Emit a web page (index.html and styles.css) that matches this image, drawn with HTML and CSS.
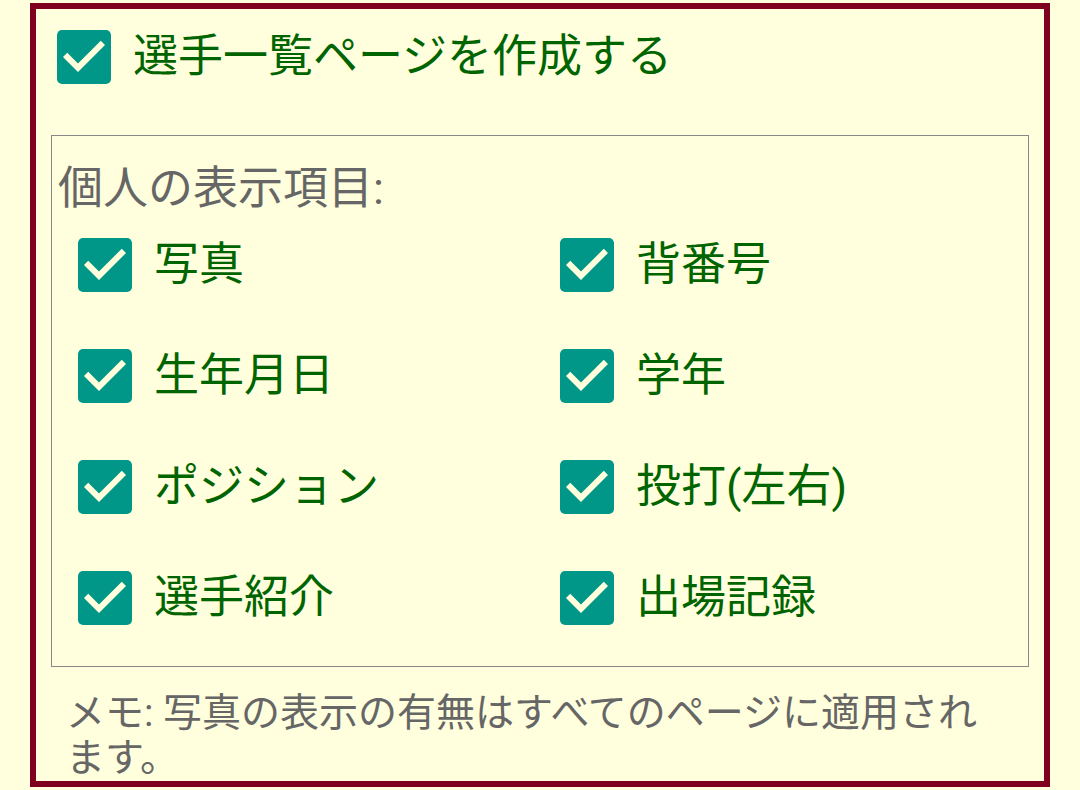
FILE: index.html
```html
<!DOCTYPE html>
<html lang="ja">
<head>
  <meta charset="UTF-8">
  <meta name="viewport" content="width=device-width, initial-scale=1.0">
  <title>選手一覧ページ設定</title>
  <link rel="stylesheet" href="styles.css">
</head>
<body>
  <svg class="defs" width="0" height="0">
    <symbol id="checked" viewBox="0 0 18 18">
      <rect width="18" height="18" rx="1.7" fill="#009688"/>
      <path d="M7 14L2 9l1.41-1.41L7 11.17l7.59-7.59L16 5l-9 9z" fill="#ffffdd"/>
    </symbol>
  </svg>

  <div class="panel">
    <label class="main-option">
      <svg class="check"><use href="#checked"/></svg>
      <span>選手一覧ページを作成する</span>
    </label>

    <div class="fields">
      <div class="fields-title">個人の表示項目:</div>
      <div class="field-grid">
        <label class="field"><svg class="check"><use href="#checked"/></svg><span>写真</span></label>
        <label class="field"><svg class="check"><use href="#checked"/></svg><span>背番号</span></label>
        <label class="field"><svg class="check"><use href="#checked"/></svg><span>生年月日</span></label>
        <label class="field"><svg class="check"><use href="#checked"/></svg><span>学年</span></label>
        <label class="field"><svg class="check"><use href="#checked"/></svg><span>ポジション</span></label>
        <label class="field"><svg class="check"><use href="#checked"/></svg><span>投打(左右)</span></label>
        <label class="field"><svg class="check"><use href="#checked"/></svg><span>選手紹介</span></label>
        <label class="field"><svg class="check"><use href="#checked"/></svg><span>出場記録</span></label>
      </div>
    </div>

    <p class="memo">メモ: 写真の表示の有無はすべてのページに適用されます。</p>
  </div>
</body>
</html>
```

FILE: styles.css
```css
body {
  margin: 0;
  font-family: Roboto, "Noto Sans CJK JP", sans-serif;
  background: #ffffdd;
  color: #666;
}

.defs {
  position: absolute;
}

.panel {
  box-sizing: border-box;
  width: 1020px;
  margin: 3px 0 0 30px;
  padding-top: 21px;
  border: 6px solid #800020;
}

.check {
  flex: none;
  width: 54px;
  height: 54px;
}

.main-option {
  display: flex;
  align-items: center;
  gap: 22px;
  margin-left: 21px;
  font-size: 45px;
  line-height: 54px;
  color: #006400;
}

.fields {
  margin: 51px 15px 0;
  padding: 26px 6px 41px;
  border: 1px solid #888;
}

.fields-title {
  font-size: 45px;
  line-height: 54px;
}

.field-grid {
  display: grid;
  grid-template-columns: 1fr 1fr;
  row-gap: 57px;
  margin-top: 22px;
}

.field {
  display: flex;
  align-items: center;
  gap: 22px;
  padding-left: 20px;
  font-size: 45px;
  line-height: 54px;
  color: #006400;
}

.memo {
  margin: 24px 34px 0 30px;
  font-size: 39px;
  line-height: 45px;
}
```
